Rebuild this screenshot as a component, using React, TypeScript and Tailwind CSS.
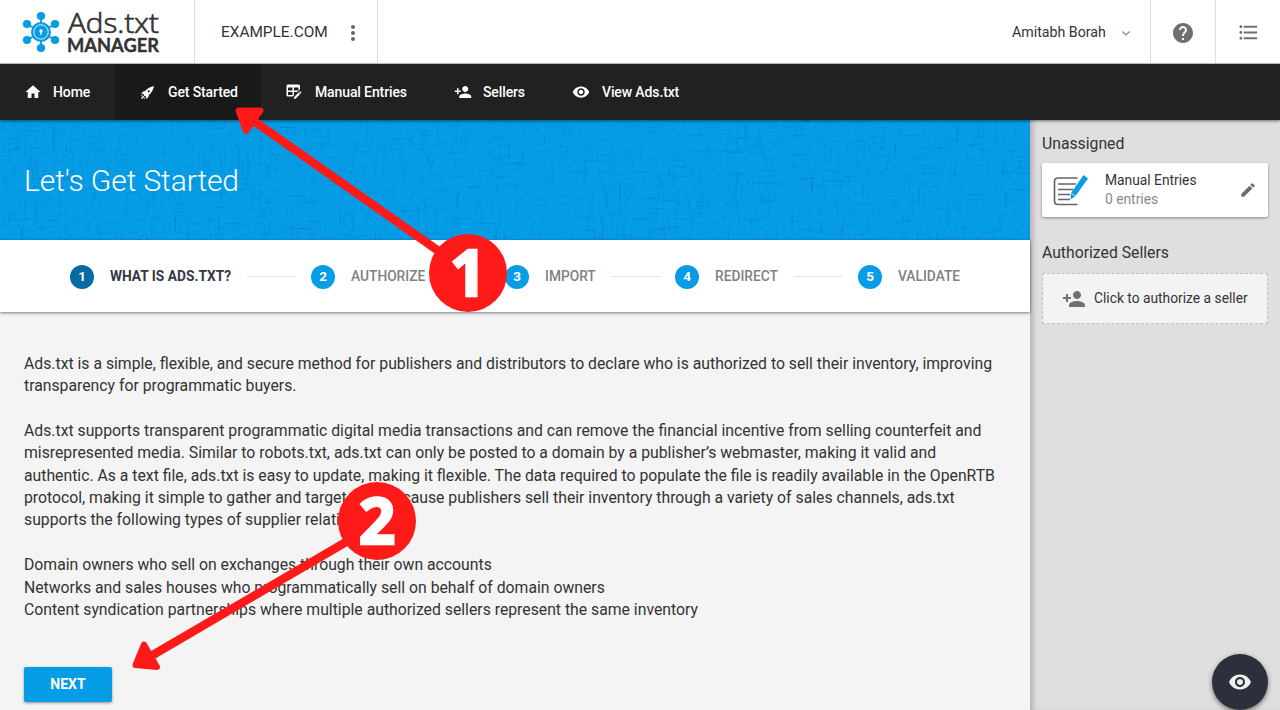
import type { ReactNode } from "react";
import {
  MdEdit,
  MdFormatListBulleted,
  MdHelp,
  MdHome,
  MdMoreVert,
  MdRemoveRedEye,
} from "react-icons/md";

const TABLE_EDIT =
  "M21.7 13.35L20.7 14.35L18.65 12.3L19.65 11.3C19.86 11.08 20.21 11.08 20.42 11.3L21.7 12.58C21.92 12.79 21.92 13.14 21.7 13.35M12 18.94V21H14.06L20.12 14.88L18.07 12.83L12 18.94M4 2H18C19.1 2 20 2.9 20 4V8.17L16.17 12H12V16.17L10.17 18H4C2.9 18 2 17.1 2 16V4C2 2.9 2.9 2 4 2M4 6V10H10V6H4M12 6V10H18V6H12M4 12V16H10V12H4Z";
const ROCKET =
  "M2.81 14.12L5.64 11.29L8.17 10.79C11.39 6.41 17.55 4.22 19.78 4.22C19.78 6.45 17.59 12.61 13.21 15.83L12.71 18.36L9.88 21.19L9.17 17.66C7.76 17.66 7.76 17.66 7.05 16.95C6.34 16.24 6.34 16.24 6.34 14.83L2.81 14.12M5.64 16.95L7.05 18.36L4.39 21.03H2.97V19.61L5.64 16.95M4.22 15.54L5.46 15.71L3 18.16V16.74L4.22 15.54M8.29 18.54L8.46 19.78L7.26 21H5.84L8.29 18.54M13 9.5A1.5 1.5 0 0 0 11.5 11A1.5 1.5 0 0 0 13 12.5A1.5 1.5 0 0 0 14.5 11A1.5 1.5 0 0 0 13 9.5Z";
const PERSON_ADD =
  "M15 12c2.21 0 4-1.79 4-4s-1.79-4-4-4-4 1.79-4 4 1.79 4 4 4zm-9-2V7H4v3H1v2h3v3h2v-3h3v-2H6zm9 4c-2.67 0-8 1.34-8 4v2h16v-2c0-2.66-5.33-4-8-4z";

function Icon({ d, className }: { d: string; className: string }) {
  return (
    <svg viewBox="0 0 24 24" fill="currentColor" className={className}>
      <path d={d} />
    </svg>
  );
}

function Logo() {
  const nodes = [
    [41, 16],
    [55, 24],
    [55, 40],
    [41, 48],
    [27, 40],
    [27, 24],
  ];
  return (
    <svg width="194" height="64" viewBox="0 0 194 64" className="shrink-0">
      <g fill="#069ce6" stroke="#069ce6">
        {nodes.map(([x, y]) => (
          <g key={`${x}-${y}`}>
            <line x1="41" y1="32" x2={x} y2={y} strokeWidth="1.8" />
            <circle cx={x} cy={y} r="4.1" stroke="none" />
          </g>
        ))}
        <circle cx="41" cy="32" r="10" stroke="none" />
      </g>
      <circle cx="41" cy="32" r="7.2" fill="none" stroke="#d8effb" strokeWidth="1" />
      <circle cx="41" cy="31" r="1.7" fill="#fff" />
      <path d="M40.4 31h1.2v4h-1.2z" fill="#fff" />
      <text x="68" y="33" fontSize="28" textLength="91" lengthAdjust="spacingAndGlyphs" fill="#333" stroke="#333" strokeWidth="0.7" className="font-['Open_Sans',sans-serif] font-light">
        Ads.txt
      </text>
      <text x="67" y="52" fontSize="18.8" textLength="92" lengthAdjust="spacingAndGlyphs" fill="#333" stroke="#333" strokeWidth="0.4" className="font-[Lato,sans-serif] font-bold">
        MANAGER
      </text>
    </svg>
  );
}

function makeThreads() {
  let seed = 4211;
  const rnd = () => {
    seed = (seed * 16807) % 2147483647;
    return seed / 2147483647;
  };
  return Array.from({ length: 3600 }, () => {
    const vertical = rnd() > 0.45;
    const len = 2 + rnd() * rnd() * 22;
    return {
      x: rnd() * 1030,
      y: rnd() * 120,
      w: vertical ? 0.9 : len,
      h: vertical ? len : 0.9,
      o: 0.04 + rnd() * rnd() * rnd() * 0.32,
    };
  });
}
const threads = makeThreads();

function NavItem({ icon, label, className }: { icon: ReactNode; label: string; className: string }) {
  return (
    <a className={`flex h-full shrink-0 items-center pl-6 text-[14px] font-medium tracking-[-0.12px] text-white ${className}`}>
      {icon}
      <span className="whitespace-nowrap">{label}</span>
    </a>
  );
}

const steps = [
  { n: 1, label: "WHAT IS ADS.TXT?", width: "w-[241px]" },
  { n: 2, label: "AUTHORIZE", width: "w-[194px]" },
  { n: 3, label: "IMPORT", width: "w-[170px]" },
  { n: 4, label: "REDIRECT", width: "w-[183px]" },
  { n: 5, label: "VALIDATE", width: "w-[110px]" },
];

function Stepper() {
  return (
    <div className="relative z-10 flex h-[72px] shrink-0 items-center bg-white pl-[70px] pt-[1px] shadow-[0_1px_3px_rgba(0,0,0,0.5)]">
      {steps.map((s, i) => (
        <div key={s.n} className={`flex shrink-0 items-center ${s.width}`}>
          <span
            className={`flex size-6 shrink-0 items-center justify-center rounded-full text-[13.5px] font-bold text-white ${i === 0 ? "bg-[#066aa3]" : "bg-[#069ce6]"}`}
          >
            {s.n}
          </span>
          <span
            className={`ml-4 whitespace-nowrap text-[13.75px] ${i === 0 ? "font-bold text-[#333845]" : "font-medium text-[#808080]"}`}
          >
            {s.label}
          </span>
          {i < steps.length - 1 && <span className="ml-4 mr-[15px] h-px flex-1 bg-[#e2e2e2]" />}
        </div>
      ))}
    </div>
  );
}

const paragraphs = [
  [
    "Ads.txt is a simple, flexible, and secure method for publishers and distributors to declare who is authorized to sell their inventory, improving",
    "transparency for programmatic buyers.",
  ],
  [
    "Ads.txt supports transparent programmatic digital media transactions and can remove the financial incentive from selling counterfeit and",
    "misrepresented media. Similar to robots.txt, ads.txt can only be posted to a domain by a publisher’s webmaster, making it valid and",
    "authentic. As a text file, ads.txt is easy to update, making it flexible. The data required to populate the file is readily available in the OpenRTB",
    "protocol, making it simple to gather and target ads. Because publishers sell their inventory through a variety of sales channels, ads.txt",
    "supports the following types of supplier relationships:",
  ],
  [
    "Domain owners who sell on exchanges through their own accounts",
    "Networks and sales houses who programmatically sell on behalf of domain owners",
    "Content syndication partnerships where multiple authorized sellers represent the same inventory",
  ],
];

function Annotations() {
  return (
    <div className="pointer-events-none absolute inset-0 z-30">
      <svg width="1280" height="710" className="absolute inset-0" stroke="#ff1a1a" fill="#ff1a1a" strokeLinejoin="round">
        <path d="M440 252L251 119" strokeWidth="8.5" />
        <path d="M238.5 110.5H260.5L246 131Z" strokeWidth="6" />
        <path d="M346 542L146 659" strokeWidth="8.5" />
        <path d="M135.5 665L144 644.5L157 667Z" strokeWidth="6" />
      </svg>
      <div className="absolute left-[429px] top-[234px] flex size-[78px] items-center justify-center rounded-full bg-[#ff1a1a] pb-[2px] font-['Open_Sans',sans-serif] text-[64px] font-bold leading-none text-white [-webkit-text-stroke:2.5px_white]">
        1
      </div>
      <div className="absolute left-[338px] top-[482px] flex size-[78px] items-center justify-center rounded-full bg-[#ff1a1a] pb-[2px] font-['Open_Sans',sans-serif] text-[64px] font-bold leading-none text-white [-webkit-text-stroke:2.5px_white]">
        2
      </div>
    </div>
  );
}

export default function App() {
  return (
    <div className="relative flex h-[710px] w-[1280px] flex-col overflow-hidden bg-[#f4f4f4] font-[Roboto,sans-serif] text-[#333]">
      <header className="flex h-16 shrink-0 border-b border-[#ccc] bg-white">
        <Logo />
        <div className="flex w-[184px] items-center border-x border-[#ddd] pl-[26px] pt-[3px]">
          <span className="w-[120px] whitespace-nowrap text-[15.4px]">EXAMPLE.COM</span>
          <MdMoreVert className="size-6 text-[#666]" />
        </div>
        <div className="flex-1" />
        <div className="flex w-[139px] items-center border-r border-[#ddd] pt-[2px]">
          <span className="w-[106px] whitespace-nowrap text-[14.2px]">Amitabh Borah</span>
          <svg width="16" height="16" viewBox="0 0 16 16" fill="none" stroke="#888" strokeWidth="1.2">
            <path d="M4.5 6.5L8 10L11.5 6.5" />
          </svg>
        </div>
        <div className="flex w-[65px] items-center justify-center border-r border-[#ddd] pt-[2px]">
          <MdHelp className="size-6 text-[#707070]" />
        </div>
        <div className="flex w-16 items-center justify-center pt-[2px]">
          <MdFormatListBulleted className="size-[23px] text-[#707070]" />
        </div>
      </header>

      <nav className="relative z-20 flex h-14 shrink-0 bg-[#212121] shadow-[0_1px_3px_rgba(0,0,0,0.5)]">
        <NavItem label="Home" className="w-[115px]" icon={<MdHome className="mr-[11px] size-[18px]" />} />
        <NavItem label="Get Started" className="w-[146px] bg-[#191919]" icon={<Icon d={ROCKET} className="mr-[11px] size-[18px]" />} />
        <NavItem label="Manual Entries" className="w-[169px]" icon={<Icon d={TABLE_EDIT} className="mr-[12px] size-[18px]" />} />
        <NavItem label="Sellers" className="w-[118px]" icon={<Icon d={PERSON_ADD} className="mr-[11px] size-[18px]" />} />
        <NavItem label="View Ads.txt" className="w-[155px]" icon={<MdRemoveRedEye className="mr-[12px] size-[18px]" />} />
      </nav>

      <div className="flex min-h-0 flex-1">
        <main className="flex w-[1030px] shrink-0 flex-col">
          <section className="relative flex h-[120px] shrink-0 items-center bg-[#069ce6] pl-6">
            <svg width="1030" height="120" className="absolute inset-0" fill="#064b7c">
              {threads.map((t, i) => (
                <rect key={i} x={t.x} y={t.y} width={t.w} height={t.h} opacity={t.o} />
              ))}
            </svg>
            <h1 className="relative text-[30px] font-light tracking-[-0.1px] text-white">Let's Get Started</h1>
          </section>
          <Stepper />
          <section className="flex flex-col gap-[22.4px] pl-6 pt-[40.6px] text-[15.77px] leading-[22.4px]">
            {paragraphs.map((p, i) => (
              <div key={i}>
                {p.map((line) => (
                  <div key={line} className="whitespace-nowrap">
                    {line}
                  </div>
                ))}
              </div>
            ))}
          </section>
          <button className="ml-6 mt-[45.4px] h-[35.5px] w-[88px] shrink-0 rounded-[2px] bg-[#069ce6] text-[14px] font-bold text-white shadow-[0_1px_3px_rgba(0,0,0,0.4)]">
            NEXT
          </button>
        </main>

        <aside className="flex w-[250px] shrink-0 flex-col bg-[#dfdfdf] px-3 pt-[13px] shadow-[inset_6px_0_6px_-4px_rgba(0,0,0,0.25)]">
          <h2 className="h-[30px] text-[15.75px] leading-[22px]">Unassigned</h2>
          <div className="flex h-[54px] shrink-0 items-center rounded-[2px] bg-white pl-[11px] shadow-[0_1px_3px_rgba(0,0,0,0.4)]">
            <svg width="36" height="36" viewBox="0 0 36 36" fill="none">
              <path d="M24.5 6H5Q1.5 6 1.5 9.5V29Q1.5 32.5 5 32.5H24.5" stroke="#666" strokeWidth="1.7" />
              <path d="M5 12H23M5 17.5H20M5 22.5H17M5 27.5H17" stroke="#666" strokeWidth="1.5" />
              <path d="M30.5 3L35 6.5L22.5 24L17.5 27.5L18 21Z" fill="#069ce6" />
              <path d="M18 21.2L22.5 24.2" stroke="#fff" strokeWidth="0.7" />
            </svg>
            <div className="ml-4 w-[134px]">
              <div className="text-[13.8px] leading-[19px]">Manual Entries</div>
              <div className="text-[13.8px] leading-[19px] text-[#888]">0 entries</div>
            </div>
            <MdEdit className="size-[18px] text-[#6b6b6b]" />
          </div>
          <h2 className="mt-[25px] h-[31px] text-[15.75px] leading-[22px]">Authorized Sellers</h2>
          <div className="flex h-[51px] shrink-0 items-center border border-dashed border-[#bdbdbd] bg-[#f3f3f3] pl-[19px]">
            <Icon d={PERSON_ADD} className="size-6 text-[#707070]" />
            <span className="ml-[8px] whitespace-nowrap text-[13.8px]">Click to authorize a seller</span>
          </div>
        </aside>
      </div>

      <button className="absolute left-[1212px] top-[654px] z-20 flex size-14 items-center justify-center rounded-full bg-[#2c303d] text-[#eee] shadow-[0_2px_5px_rgba(0,0,0,0.5)]">
        <MdRemoveRedEye className="size-6" />
      </button>
      <Annotations />
    </div>
  );
}
